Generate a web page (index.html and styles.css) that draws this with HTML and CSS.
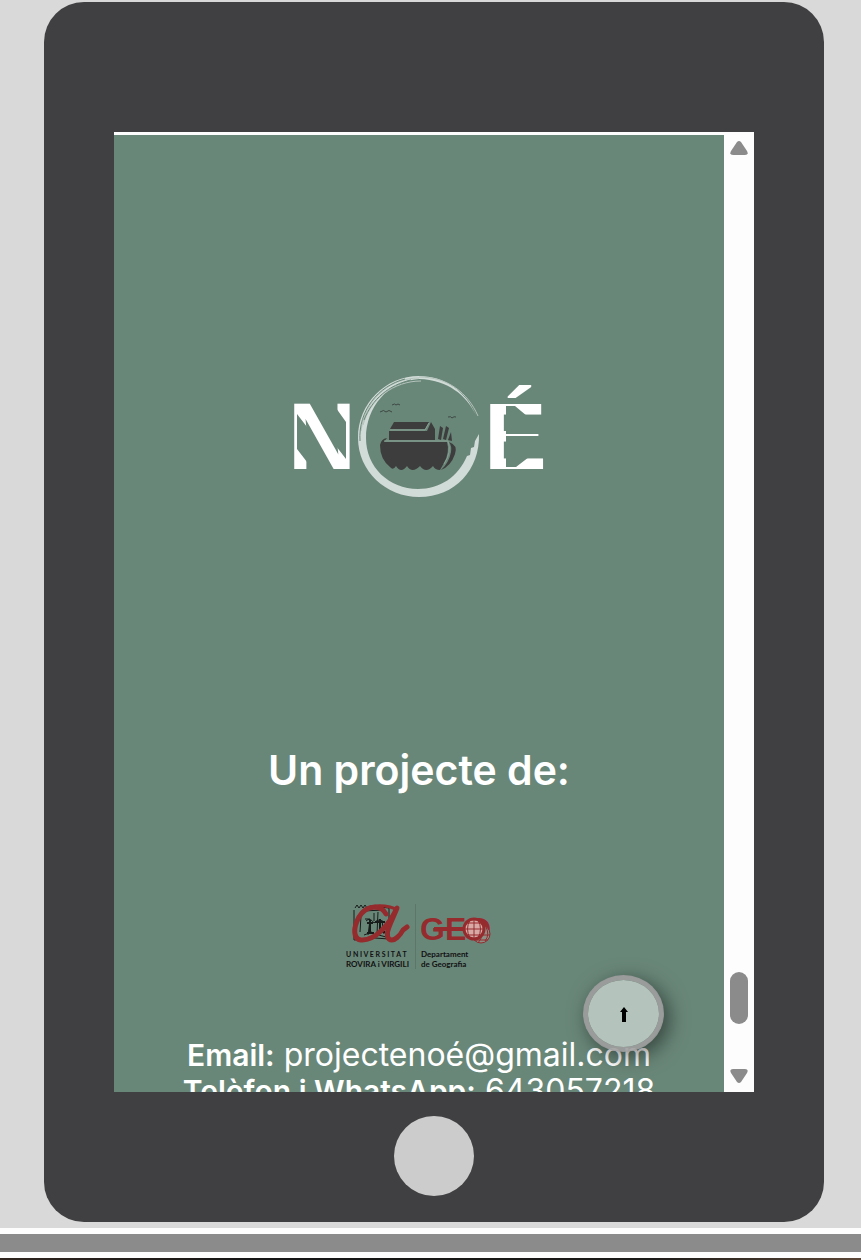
FILE: index.html
```html
<!DOCTYPE html>
<html lang="ca">
<head>
<meta charset="utf-8">
<meta name="viewport" content="width=device-width, initial-scale=1">
<title>Projecte NOÉ</title>
<link rel="stylesheet" href="styles.css">
</head>
<body>
<main class="stage">
  <section class="tablet">
    <div class="screen">
      <footer class="page">
        <svg class="brand" viewBox="279 365 280 140" role="img" aria-label="NOÉ">
          <text class="brand-letter" x="288" y="469">N</text>
          <text class="brand-letter" x="484" y="469">É</text>
          <path class="cut" d="M297 414L307 427V462L297 449ZM346 459L336 446V408L346 422ZM506 406H515L527 416H506ZM506 467H516L529 457H506ZM506 427H545V434H506ZM506 436H545V445H506Z"/>
          <path class="ring" fill-rule="evenodd" d="M419 376C386 376 358 403 358 438C358 471 386 497 419 497C455 497 480 470 479 434L475 441L474 447L471 448L470 455L467 456C458 477 440 489 418 489C389 489 366 467 366 438C366 407 388 381 419 379C448 380 466 395 476 415C465 390 444 376 419 376Z"/>
          <path class="ring-line" d="M361 431C365 400 389 378 419 378M363 425C370 399 394 381 421 381M419 377C448 377 468 393 478 416"/>
          <path class="ring-gap" d="M360 441C358 411 378 386 405 379M364 420C372 399 389 385 411 380"/>
          <g class="ark">
            <path d="M394 422H429L425 429H390Z"/>
            <path d="M389 431H427L431 422L435 429V440H389Z"/>
            <path d="M380 445Q381 439 387 438L384 442H447Q450 452 444 463L440 470Q435 470 433 466Q426 474 420 466Q412 474 407 466Q401 474 396 466Q393 471 390 467Q380 459 380 445Z"/>
            <path d="M449 442Q458 445 455 454Q451 466 441 470Q449 463 451 452Q452 446 449 442ZM438 439L440 426L443 428L441 440ZM443 439L446 426L449 428L446 440ZM448 440L451 432L452 441Z"/>
          </g>
          <path class="ark-trim" d="M429 423L425 430H390M384 441H448Q452 452 444 464"/>
          <path class="birds" d="M380 412Q384 409 386 412Q389 409 392 412M392 405Q395 403 396 405Q398 403 400 405M448 417Q451 416 452 418Q454 416 456 417"/>
        </svg>
        <h2 class="heading">Un projecte de:</h2>
        <svg class="partners" viewBox="337 895 164 80" role="img" aria-label="Universitat Rovira i Virgili, GEO Departament de Geografia">
          <g class="sketch">
            <path d="M355 908L357 905L359 908L361 905L363 908L365 905L367 908L370 906L389 908V939L375 938L354 940V910M361 916L360 932M365 919H370M374 913V921M366 921Q370 917 374 923Q379 917 385 923M370 920L368 935M378 912L377 934M382 921L384 934M364 935L372 932M375 934L386 937M362 911L385 910"/>
            <path class="sketch-heavy" d="M370 920V932M380 919V930M367 923H373M375 922H385M367 933H374M377 932H385"/>
          </g>
          <path class="brush" d="M386 914C381 904 366 905 359 917C353 928 353 939 361 940C375 941 389 925 397 908C391 923 384 934 389 939C394 943 401 934 403 930L407 927"/>
          <path class="brush-thin" d="M363 911Q374 903 390 907L396 909"/>
          <path class="divider" d="M415.500 904V969"/>
          <text class="geo" x="420" y="940">GEO</text>
          <path class="geo-bar" d="M434 929H465"/>
          <g class="globe">
            <circle class="globe-back" cx="481" cy="934" r="9"/>
            <path d="M473 935H490M474 940H488M476 926Q486 934 478 943M486 927Q490 935 485 941"/>
            <circle class="globe-face" cx="474" cy="929" r="10"/>
            <path d="M464 929H484M466 923H482M466 935H482M474 919V939M470 920Q465 929 470 938M478 920Q483 929 478 938"/>
            <circle class="lens" cx="474" cy="929" r="10"/>
          </g>
          <text class="uni" x="346" y="957">U N I V E R S I T A T</text>
          <text class="dept" x="346" y="967">ROVIRA i VIRGILI</text>
          <text class="dept" x="421" y="957">Departament</text>
          <text class="dept" x="421" y="967">de Geografia</text>
        </svg>
        <address class="contact">
          <p><strong>Email:</strong> projectenoé@gmail.com</p>
          <p><strong>Telèfon i WhatsApp:</strong> 643057218</p>
        </address>
      </footer>
      <div class="scrollbar" aria-hidden="true">
        <svg class="arrow" viewBox="0 0 18 14"><path d="M7 1Q9-1 11 1L17 10Q19 14 15 14H3Q-1 14 1 10Z"/></svg>
        <span class="thumb"></span>
        <svg class="arrow" viewBox="0 0 18 14"><path d="M7 13Q9 15 11 13L17 4Q19 0 15 0H3Q-1 0 1 4Z"/></svg>
      </div>
      <button class="to-top" type="button" aria-label="Torna a dalt">
        <svg class="up" viewBox="0 0 8 16"><path d="M4 0L8 5H6V15H2V5H0Z"/></svg>
      </button>
    </div>
    <button class="home" type="button" aria-label="Inici"></button>
  </section>
</main>
<div class="band"></div>
<div class="photo"></div>
</body>
</html>
```
FILE: styles.css
```css
* { box-sizing: border-box; }
body {
  margin: 0;
  background: #fdfdfd;
  font-family: Inter, "Open Sans", sans-serif;
}
.stage { padding: 2px 37px 6px 44px; background: #d9d9d9; }
.tablet {
  display: flex;
  flex-direction: column;
  padding: 130px 70px 26px;
  border-radius: 40px;
  background: #404042;
}
.screen {
  position: relative;
  display: flex;
  aspect-ratio: 2 / 3;
  overflow: hidden;
  padding-top: 3px;
  background: #fdfdfe;
}
.page {
  flex: 1;
  min-width: 0;
  min-height: 0;
  display: flex;
  flex-direction: column;
  align-items: center;
  padding-top: 230px;
  background: #698779;
  color: #fff;
}
.brand { flex: none; width: 280px; height: 140px; }
.brand-letter { font: bold 94px "Liberation Sans", sans-serif; fill: #fff; }
.cut { fill: #698779; }
.ring { fill: #d1dbd7; }
.ring-line { fill: none; stroke: #b4c3bc; stroke-width: 1; }
.ring-gap { fill: none; stroke: #698779; stroke-width: 1; }
.ark { fill: #3d3d3d; }
.ark-trim { fill: none; stroke: #8a9e94; stroke-width: 1; }
.birds { fill: none; stroke: #3d4944; stroke-width: 1; }
.heading {
  margin: 240px 0 100px;
  font-size: 41px;
  font-weight: 600;
  line-height: 50px;
  white-space: nowrap;
}
.partners { flex: none; width: 164px; height: 80px; }
.sketch { fill: none; stroke: #171b19; stroke-width: 1; }
.sketch-heavy { stroke-width: 2; }
.brush { fill: none; stroke: #962b2e; stroke-width: 5; stroke-linecap: round; stroke-linejoin: round; }
.brush-thin { fill: none; stroke: #962b2e; stroke-width: 3; stroke-linecap: round; }
.divider { stroke: #5c766a; stroke-width: 1; }
.geo { font: bold 32px "Liberation Sans", sans-serif; fill: #962b2e; }
.geo-bar { stroke: #962b2e; stroke-width: 4; }
.globe { fill: none; stroke: #962b2e; stroke-width: 1; }
.globe-back { fill: #8c9186; }
.globe-face { fill: #d8aaa5; }
.lens { stroke-width: 3; }
.uni { font: bold 7px Lato, sans-serif; fill: #111; }
.dept { font: bold 8px Lato, sans-serif; fill: #111; }
.contact { margin-top: 62px; font-size: 32px; font-style: normal; line-height: 36px; text-align: center; white-space: nowrap; }
.contact p { margin: 0; }
.contact strong { font-size: 30px; font-weight: 600; }
.scrollbar {
  flex: none;
  width: 30px;
  display: flex;
  flex-direction: column;
  align-items: center;
  padding: 6px 0 9px;
}
.arrow { width: 18px; height: 14px; fill: #8b8b8b; }
.thumb { width: 18px; height: 52px; margin: auto 0 45px; border-radius: 9px; background: #8b8b8b; }
.to-top {
  position: absolute;
  right: 90px;
  bottom: 40px;
  display: grid;
  place-items: center;
  width: 81px;
  height: 77px;
  padding: 2px 0 0;
  border: 5px solid rgba(158, 159, 158, 0.9);
  border-radius: 50%;
  background: #b4c3bb;
  background-clip: padding-box;
  box-shadow: 5px 5px 20px rgba(0, 0, 0, 0.5);
}
.up { width: 8px; height: 16px; }
.home {
  align-self: center;
  width: 80px;
  height: 80px;
  margin-top: 24px;
  padding: 0;
  border: 0;
  border-radius: 50%;
  background: #ccc;
}
.band { height: 18px; margin: 6px 0; background: #8b8b8b; }
.photo { height: 2px; background: linear-gradient(90deg, #30251f, #151515 30%, #1b1a18 75%, #5b4636); }
```
